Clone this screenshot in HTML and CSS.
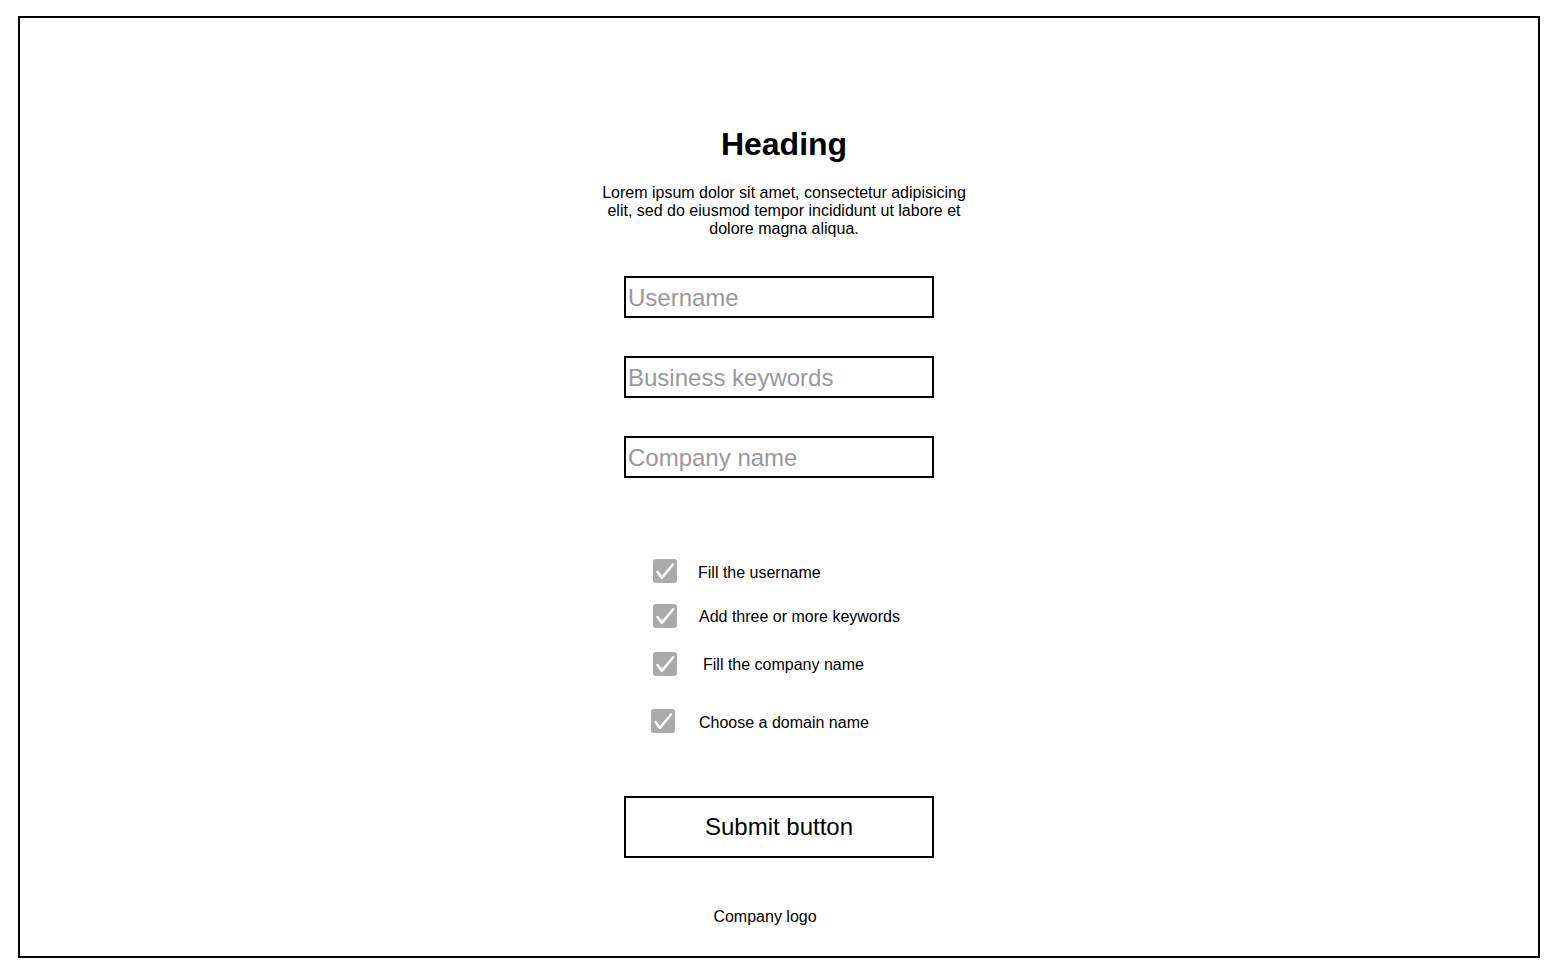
FILE: index.html
```html
<!DOCTYPE html>
<html lang="en">
<head>
<meta charset="utf-8">
<title>Form wireframe</title>
<link rel="stylesheet" href="styles.css">
</head>
<body>
<main class="frame">
  <h1 class="heading">Heading</h1>
  <p class="intro">Lorem ipsum dolor sit amet, consectetur adipisicing elit, sed do eiusmod tempor incididunt ut labore et dolore magna aliqua.</p>
  <form class="form">
    <input class="field" type="text" placeholder="Username">
    <input class="field" type="text" placeholder="Business keywords">
    <input class="field" type="text" placeholder="Company name">
    <ul class="checklist">
      <li class="check-row row-1"><span class="box"><svg viewBox="0 0 24 24" width="24" height="24"><polyline points="4.5,13 8.8,18.8 20,5.5" fill="none" stroke="#fff" stroke-width="2.6" stroke-linecap="round" stroke-linejoin="round"/></svg></span><span class="label label-1">Fill the username</span></li>
      <li class="check-row row-2"><span class="box"><svg viewBox="0 0 24 24" width="24" height="24"><polyline points="4.5,13 8.8,18.8 20,5.5" fill="none" stroke="#fff" stroke-width="2.6" stroke-linecap="round" stroke-linejoin="round"/></svg></span><span class="label label-2">Add three or more keywords</span></li>
      <li class="check-row row-3"><span class="box"><svg viewBox="0 0 24 24" width="24" height="24"><polyline points="4.5,13 8.8,18.8 20,5.5" fill="none" stroke="#fff" stroke-width="2.6" stroke-linecap="round" stroke-linejoin="round"/></svg></span><span class="label label-3">Fill the company name</span></li>
      <li class="check-row row-4"><span class="box"><svg viewBox="0 0 24 24" width="24" height="24"><polyline points="4.5,13 8.8,18.8 20,5.5" fill="none" stroke="#fff" stroke-width="2.6" stroke-linecap="round" stroke-linejoin="round"/></svg></span><span class="label label-4">Choose a domain name</span></li>
    </ul>
    <button class="submit" type="button">Submit button</button>
  </form>
  <div class="logo">Company logo</div>
</main>
</body>
</html>
```
FILE: styles.css
```css
* { box-sizing: border-box; }

html, body {
  margin: 0;
  padding: 0;
  background: #fff;
}

body {
  font-family: "Liberation Sans", Arial, Helvetica, sans-serif;
  color: #000;
  padding: 16px 0 0 18px;
}

.frame {
  width: 1522px;
  height: 942px;
  border: 2px solid #000;
  display: flex;
  flex-direction: column;
  align-items: center;
  padding-top: 108px;
}

.heading {
  margin: 0 0 0 10px;
  font-size: 32px;
  line-height: 36px;
  font-weight: bold;
}

.intro {
  margin: 22px 0 0 10px;
  width: 370px;
  font-size: 16px;
  line-height: 18px;
  text-align: center;
}

.form {
  margin-top: 38px;
  width: 310px;
  display: flex;
  flex-direction: column;
}

.field {
  width: 310px;
  height: 42px;
  margin: 0 0 38px 0;
  border: 2px solid #000;
  border-radius: 0;
  padding: 2px 2px 0 2px;
  font-family: "Liberation Sans", Arial, Helvetica, sans-serif;
  font-size: 24px;
  color: #000;
  outline: none;
  background: #fff;
}

.field::placeholder {
  color: #999;
  opacity: 1;
}

.checklist {
  list-style: none;
  margin: 43px 0 0 0;
  padding: 0 0 0 29px;
}

.check-row {
  display: flex;
  align-items: center;
  height: 24px;
  font-size: 16px;
}

.row-2 { margin-top: 21px; }
.row-3 { margin-top: 24px; }
.row-4 { margin-top: 33px; margin-left: -2px; }

.box {
  width: 24px;
  height: 24px;
  border-radius: 3px;
  background: #aaaaaa;
  display: flex;
  flex: none;
}

.label {
  white-space: nowrap;
  padding-top: 3px;
}
.label-1 { margin-left: 21px; }
.label-2 { margin-left: 22px; padding-top: 2px; }
.label-3 { margin-left: 26px; padding-top: 2px; }
.label-4 { margin-left: 24px; padding-top: 4px; }

.submit {
  margin-top: 63px;
  width: 310px;
  height: 62px;
  border: 2px solid #000;
  border-radius: 0;
  background: #fff;
  font-family: "Liberation Sans", Arial, Helvetica, sans-serif;
  font-size: 24px;
  color: #000;
  padding: 0;
}

.logo {
  margin: 50px 28px 0 0;
  font-size: 16px;
  line-height: 18px;
}
```
